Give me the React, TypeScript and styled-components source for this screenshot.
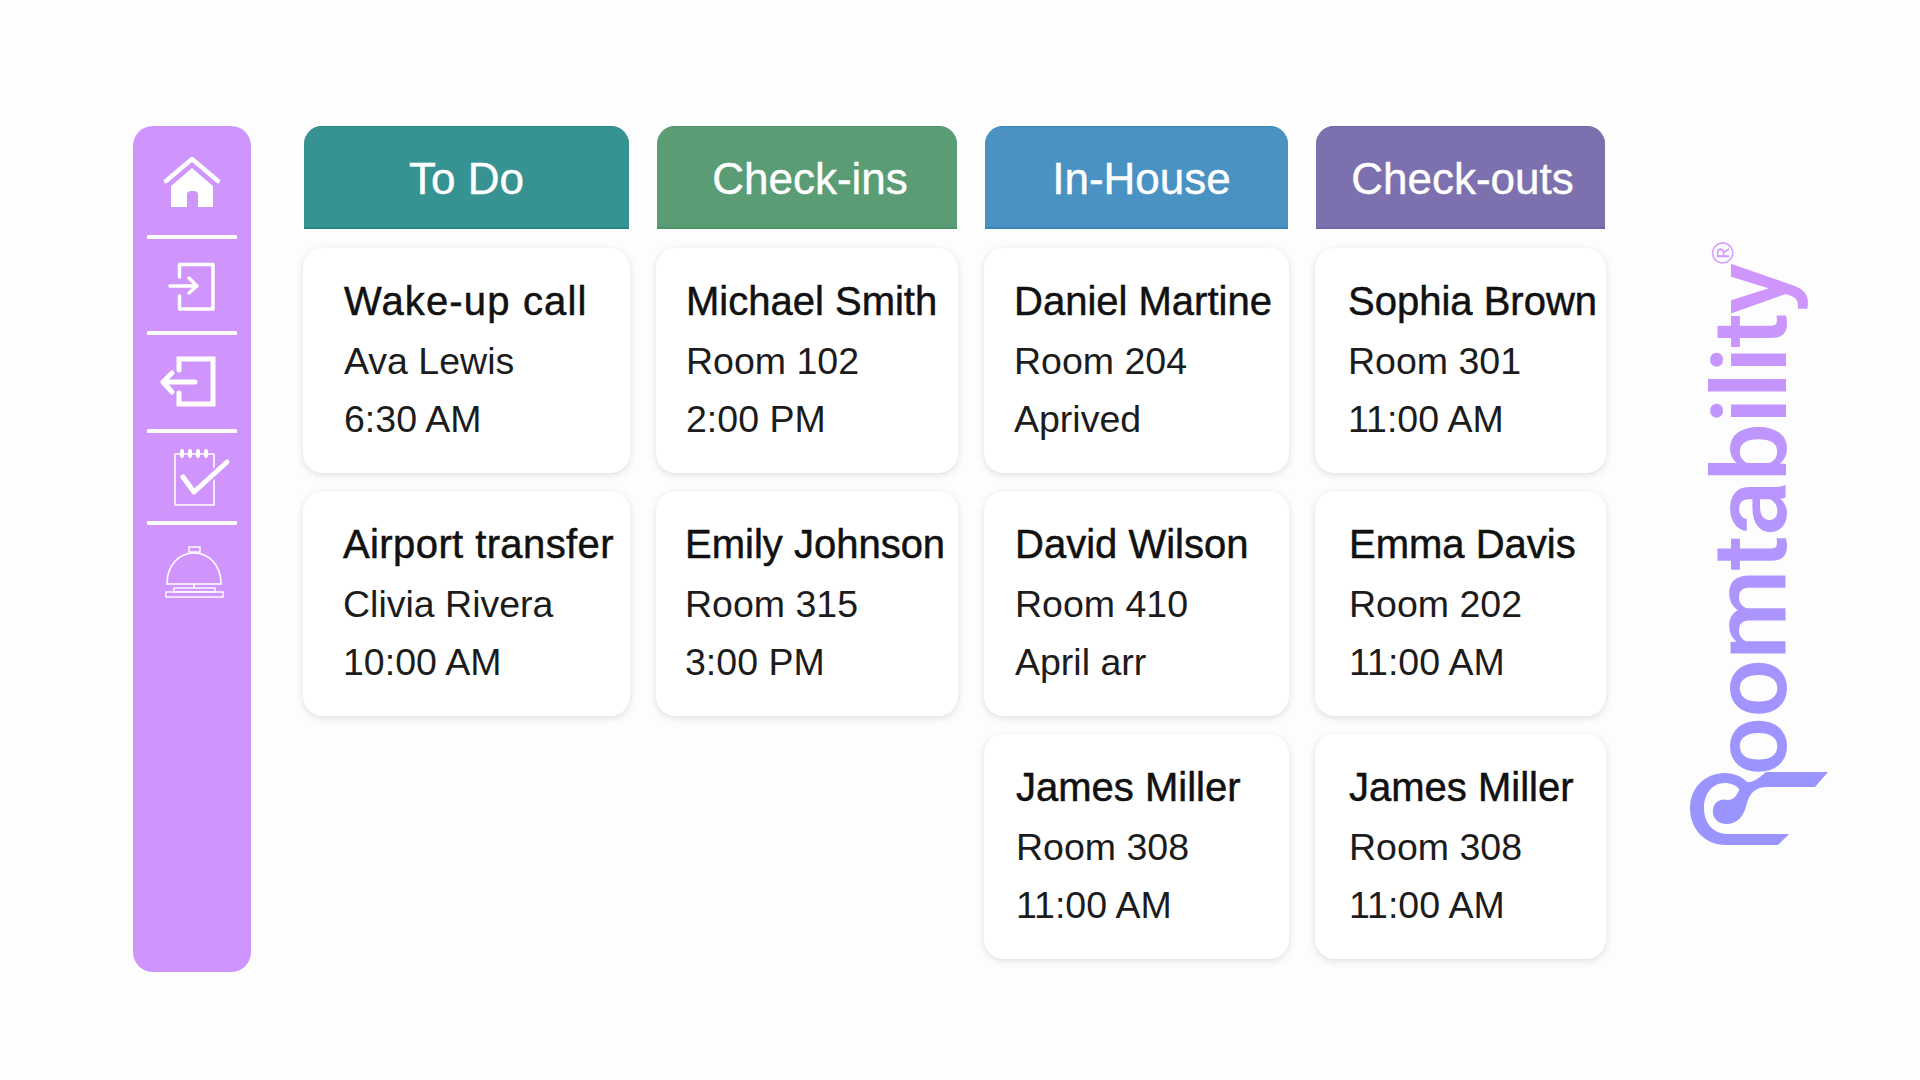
import styled, { createGlobalStyle } from "styled-components";

const GlobalStyle = createGlobalStyle`
  html, body {
    margin: 0;
    background: #fdfdfd;
    font-family: "Liberation Sans", Arial, sans-serif;
  }
`;

const Page = styled.div`
  display: flex;
  align-items: flex-start;
  width: 1920px;
  height: 1080px;
  box-sizing: border-box;
  padding: 126px 0 0 133px;
  overflow: hidden;
`;

const Sidebar = styled.nav`
  flex: none;
  width: 118px;
  height: 846px;
  background: #d094fd;
  border-radius: 20px;
  display: flex;
  flex-direction: column;
  align-items: center;
`;

const NavSlot = styled.div<{ $height: number }>`
  height: ${(props) => props.$height}px;
  width: 100%;
  svg {
    display: block;
  }
`;

const NavDivider = styled.div`
  flex: none;
  width: 90px;
  height: 4px;
  background: #fff;
  border-radius: 1px;
`;

const Board = styled.main`
  flex: none;
  display: flex;
  gap: 26px;
  margin-left: 52px;
`;

const Column = styled.section<{ $width: number }>`
  flex: none;
  width: ${(props) => props.$width}px;
  display: flex;
  flex-direction: column;
  gap: 18px;
`;

const ColumnHeader = styled.header<{ $color: string; $edge: string; $nudge: number }>`
  height: 96px;
  margin: 0 1px 1px;
  padding: 4px 0 0 ${(props) => props.$nudge}px;
  display: flex;
  align-items: center;
  justify-content: center;
  color: #fff;
  font-size: 44px;
  background: ${(props) => props.$color};
  border: solid ${(props) => props.$edge};
  border-width: 1px 0 2px;
  border-radius: 18px 18px 0 0;
  -webkit-text-stroke: 0.4px #fff;
`;

const Card = styled.article<{ $inset: number }>`
  height: 225px;
  box-sizing: border-box;
  padding: 24px 0 0 ${(props) => props.$inset}px;
  background: #fff;
  border-radius: 20px;
  box-shadow: 0 2px 7px rgba(40, 40, 60, 0.14);
  color: #111;
  white-space: nowrap;
`;

const CardTitle = styled.div<{ $spread?: number }>`
  font-size: 40px;
  line-height: 58px;
  margin-bottom: 2px;
  letter-spacing: ${(props) => props.$spread ?? 0}px;
  -webkit-text-stroke: 0.5px #111;
`;

const CardLine = styled.div`
  font-size: 37.5px;
  line-height: 58px;
  color: #1c1c1c;
`;

const Logo = styled.div`
  position: relative;
  flex: none;
  width: 138px;
  height: 610px;
  margin: 119px 0 0 83px;
`;

const LogoWord = styled.span`
  position: absolute;
  top: 19px;
  left: -3px;
  writing-mode: vertical-rl;
  transform: rotate(180deg);
  font-family: Roboto, "Liberation Sans", sans-serif;
  font-weight: 500;
  font-size: 104px;
  line-height: 130px;
  letter-spacing: -1px;
  white-space: nowrap;
  background: linear-gradient(180deg, #9a94ff, #d196fd);
  -webkit-background-clip: text;
  background-clip: text;
  color: transparent;
`;

const LogoMark = styled.svg`
  position: absolute;
  left: -4px;
  top: 520px;
`;

const Registered = styled.span`
  position: absolute;
  left: 23px;
  top: -7px;
  font-size: 30px;
  line-height: 30px;
  color: #d09aff;
  transform: rotate(-90deg);
`;

type CardData = {
  title: string;
  lines: [string, string];
  inset: number;
  spread?: number;
};

type ColumnData = {
  name: string;
  color: string;
  edge: string;
  width: number;
  nudge: number;
  cards: CardData[];
};

const columns: ColumnData[] = [
  {
    name: "To Do",
    color: "#379292",
    edge: "#2a8585",
    width: 327,
    nudge: 0,
    cards: [
      { title: "Wake-up call", lines: ["Ava Lewis", "6:30 AM"], inset: 41, spread: 1.15 },
      { title: "Airport transfer", lines: ["Clivia Rivera", "10:00 AM"], inset: 40, spread: 0.4 },
    ],
  },
  {
    name: "Check-ins",
    color: "#5a9c74",
    edge: "#4f9469",
    width: 302,
    nudge: 6,
    cards: [
      { title: "Michael Smith", lines: ["Room 102", "2:00 PM"], inset: 30 },
      { title: "Emily Johnson", lines: ["Room 315", "3:00 PM"], inset: 29 },
    ],
  },
  {
    name: "In-House",
    color: "#4a92c2",
    edge: "#3a86ba",
    width: 305,
    nudge: 10,
    cards: [
      { title: "Daniel Martine", lines: ["Room 204", "Aprived"], inset: 30 },
      { title: "David Wilson", lines: ["Room 410", "April arr"], inset: 31 },
      { title: "James Miller", lines: ["Room 308", "11:00 AM"], inset: 32 },
    ],
  },
  {
    name: "Check-outs",
    color: "#7c70ae",
    edge: "#7264a6",
    width: 291,
    nudge: 4,
    cards: [
      { title: "Sophia Brown", lines: ["Room 301", "11:00 AM"], inset: 33 },
      { title: "Emma Davis", lines: ["Room 202", "11:00 AM"], inset: 34 },
      { title: "James Miller", lines: ["Room 308", "11:00 AM"], inset: 34 },
    ],
  },
];

// icons are drawn in page pixels, the viewBox of each slot is its place on the page
function NavIcon({ top, height, children }: { top: number; height: number; children: React.ReactNode }) {
  return (
    <NavSlot $height={height}>
      <svg width="118" height={height} viewBox={`133 ${top} 118 ${height}`} fill="none" stroke="#fff">
        {children}
      </svg>
    </NavSlot>
  );
}

export default function App() {
  return (
    <>
      <GlobalStyle />
      <Page>
        <Sidebar>
          <NavIcon top={126} height={109}>
            <path d="M166 181 L192 159 L218 181" strokeWidth="4.5" strokeLinecap="round" strokeLinejoin="round" />
            <path
              d="M192 168 L171 186 V207 H187 V195 Q187 191 191 191 H194 Q198 191 198 195 V207 H213 V186 Z"
              fill="#fff"
              stroke="none"
            />
          </NavIcon>
          <NavDivider />
          <NavIcon top={239} height={92}>
            <path d="M179.5 277 V264.5 H213 V309 H179.5 V296" strokeWidth="3.5" strokeLinecap="round" strokeLinejoin="round" />
            <path d="M170 286 H197 M189 278 L197 286 L189 293" strokeWidth="3.5" strokeLinecap="round" strokeLinejoin="round" />
          </NavIcon>
          <NavDivider />
          <NavIcon top={335} height={94}>
            <path d="M179 370 V359 H213 V404 H179 V393" strokeWidth="5" strokeLinecap="round" />
            <path d="M195 382 H163 M172 373 L163 382 L172 392" strokeWidth="5" strokeLinecap="round" strokeLinejoin="round" />
          </NavIcon>
          <NavDivider />
          <NavIcon top={433} height={88}>
            <path d="M175 505 V454 H214 V505 Z" strokeWidth="1.6" strokeLinejoin="round" />
            <path d="M182 451 V456 M190 451 V456 M198 451 V456 M206 451 V456" strokeWidth="4" strokeLinecap="round" />
            <path d="M183 477 L194 492 L227 462" stroke="#d094fd" strokeWidth="9" strokeLinecap="round" strokeLinejoin="round" />
            <path d="M183 477 L194 492 L227 462" strokeWidth="5" strokeLinecap="round" strokeLinejoin="round" />
          </NavIcon>
          <NavDivider />
          <NavIcon top={525} height={100}>
            <path d="M167 584 C167 564 180 553 194 553 C208 553 221 564 221 584 Z" strokeWidth="1.6" />
            <rect x="189" y="547" width="11" height="5" strokeWidth="1.4" />
            <path d="M194 584 V588" strokeWidth="2" />
            <rect x="174" y="588" width="41" height="4" strokeWidth="1.4" />
            <rect x="166" y="592" width="57" height="5" strokeWidth="1.4" />
          </NavIcon>
        </Sidebar>

        <Board>
          {columns.map((column) => (
            <Column key={column.name} $width={column.width}>
              <ColumnHeader $color={column.color} $edge={column.edge} $nudge={column.nudge}>
                {column.name}
              </ColumnHeader>
              {column.cards.map((card) => (
                <Card key={card.title} $inset={card.inset}>
                  <CardTitle $spread={card.spread}>{card.title}</CardTitle>
                  <CardLine>{card.lines[0]}</CardLine>
                  <CardLine>{card.lines[1]}</CardLine>
                </Card>
              ))}
            </Column>
          ))}
        </Board>

        <Logo>
          <Registered>®</Registered>
          <LogoWord>oomtability</LogoWord>
          {/* swirl of the wordmark */}
          <LogoMark width="150" height="85" viewBox="1685 765 150 85" fill="none">
            <path
              d="M1789 834 L1778 845 H1726 C1705 845 1690 829 1690 808 C1690 787 1706 773 1725 773 C1733 773 1741 776 1746 781 L1740 790 C1736 785 1731 783 1725 783 C1712 783 1704 794 1704 808 C1704 824 1714 834 1728 834 Z"
              fill="#9a94ff"
            />
            <path
              d="M1828 772 L1815 787 H1768 C1755 787 1750 793 1747 803 C1744 816 1738 824 1726 824 C1716 824 1712 816 1713 809 C1714 802 1721 798 1728 800 C1733 800 1737 796 1739 790 L1746 781 C1749 784 1754 781 1760 777 L1766 772 Z"
              fill="#9a94ff"
            />
          </LogoMark>
        </Logo>
      </Page>
    </>
  );
}
